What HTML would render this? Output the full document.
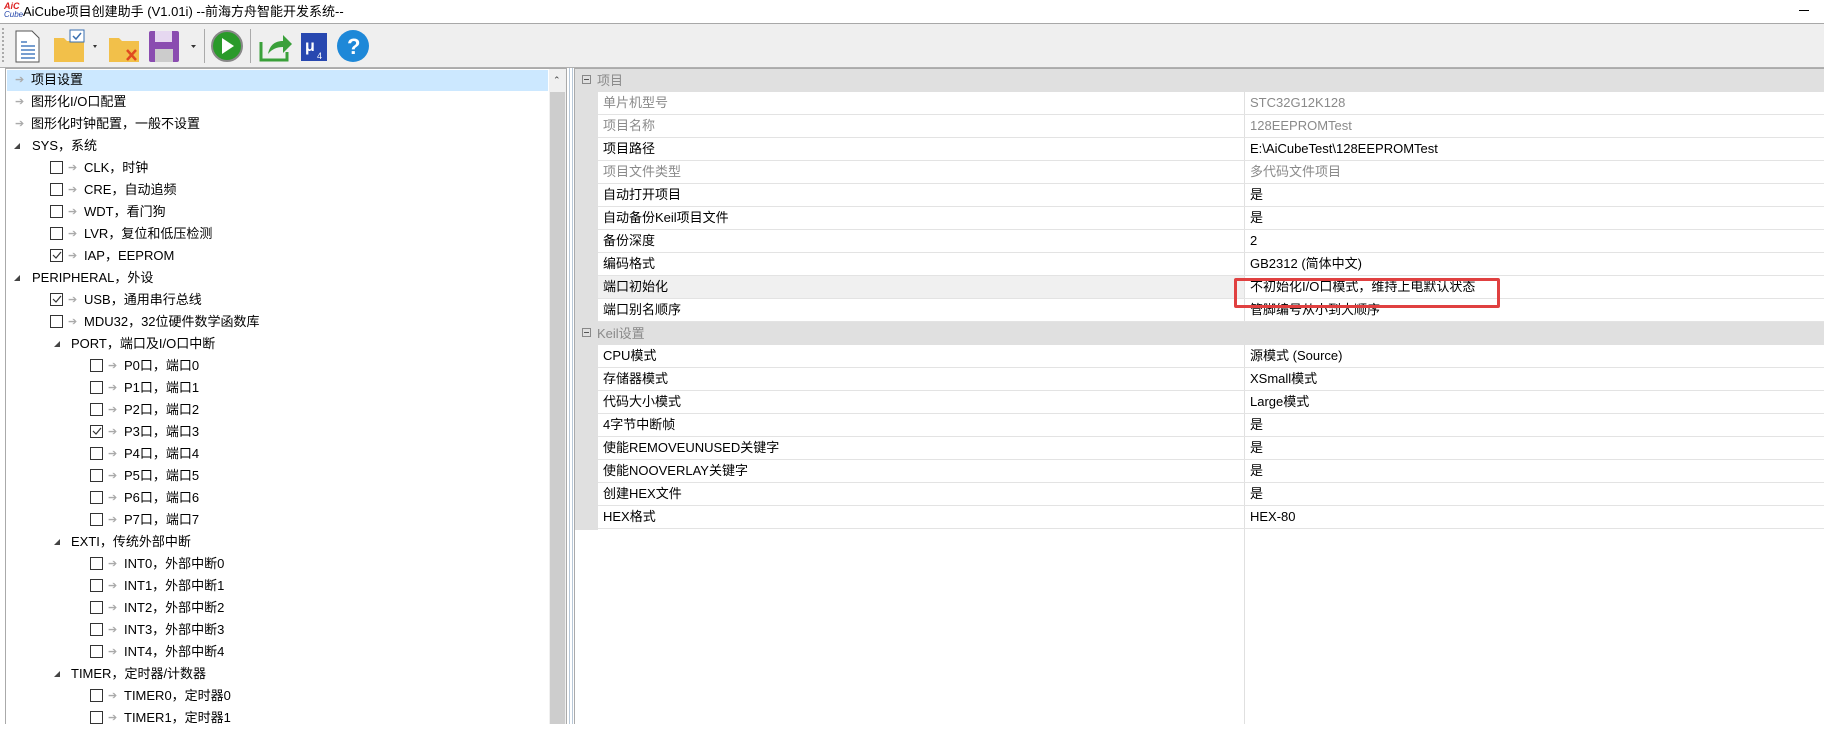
<!DOCTYPE html>
<html><head><meta charset="utf-8"><style>
*{margin:0;padding:0;box-sizing:border-box}
body{width:1824px;height:724px;overflow:hidden;background:#fff;font-family:"Liberation Sans","Noto Sans CJK SC",sans-serif;font-size:13px;color:#000;position:relative}
.a{position:absolute}
.t{position:absolute;white-space:nowrap;line-height:22px}
.cb{position:absolute;width:13px;height:13px;border:1px solid #333;background:#fff}
.ar{position:absolute;color:#aaa;font-size:11px;line-height:22px}
.tri{position:absolute;width:0;height:0;border-left:6px solid transparent;border-bottom:6px solid #444}
.pr{position:absolute;left:598px;right:0;height:23px;border-bottom:1px solid #e3e3e3}
.pl{position:absolute;left:5px;line-height:22px;white-space:nowrap}
.pv{position:absolute;left:652px;line-height:22px;white-space:nowrap}
.g{color:#8a8a8a}
</style></head><body>
<!-- title -->
<div class="a" style="left:4px;top:2px;font:bold italic 9px 'Liberation Sans';color:#d22;line-height:9px">AiC</div>
<div class="a" style="left:4px;top:11px;font:italic 8px 'Liberation Sans';color:#2244aa;line-height:8px">Cube</div>
<div class="t" style="left:23px;top:0;line-height:23px">AiCube项目创建助手 (V1.01i) --前海方舟智能开发系统--</div>
<div class="a" style="left:1799px;top:10px;width:10px;height:1px;background:#000"></div>
<div class="a" style="left:0;top:23px;width:1824px;height:1px;background:#a8a8a8"></div>
<!-- toolbar -->
<div class="a" style="left:0;top:24px;width:1824px;height:44px;background:#efefef;border-bottom:1px solid #b0b0b0"></div>
<div class="a" style="left:2px;top:28px;width:2px;height:34px;border-left:2px dotted #aaa"></div>
<svg class="a" style="left:12px;top:28px" width="370" height="36" viewBox="0 0 370 36">
 <path d="M4 3h16l7 7v24H4z" fill="#fff" stroke="#555"/><path d="M9 14h6M9 18h14M9 22h14M9 26h14M9 30h14" stroke="#4a7fc0" stroke-width="1.4"/>
 <path d="M42 10h10l3 3h17v21H42z" fill="#f2c04a"/><rect x="58" y="2" width="14" height="12" fill="#fff" stroke="#3a6fb0"/><path d="M61 8l3 3 5-6" stroke="#3a6fb0" fill="none" stroke-width="1.5"/>
 <path d="M81 17l4 0-2 3z" fill="#333"/>
 <path d="M97 10h10l3 3h17v21H97z" fill="#f2c04a"/><path d="M115 22l9 10M124 22l-9 10" stroke="#e04a20" stroke-width="2.5"/>
 <rect x="137" y="3" width="30" height="31" rx="2" fill="#8a4cb0"/><rect x="143" y="3" width="17" height="11" fill="#e6d8f0"/><rect x="143" y="21" width="18" height="13" fill="#ccc"/>
 <path d="M179 17h5l-2.5 3z" fill="#333"/>
 <rect x="192" y="1" width="1" height="34" fill="#aaa"/>
 <circle cx="215" cy="18" r="15" fill="#2a9a2a" stroke="#888" stroke-width="2"/><path d="M210 10l12 8-12 8z" fill="#fff"/>
 <rect x="238" y="1" width="1" height="34" fill="#aaa"/>
 <path d="M249 14v18h26v-8" fill="none" stroke="#3aa03a" stroke-width="3"/><path d="M256 26c2-10 8-13 15-13v-6l9 9-9 9v-6c-6 0-11 2-15 7z" fill="#3aa03a"/>
 <rect x="289" y="5" width="26" height="28" fill="#2848b0"/><text x="293" y="23" font-size="16" fill="#fff" font-family="Liberation Sans" font-weight="bold">μ</text><text x="305" y="31" font-size="9" fill="#fff" font-family="Liberation Sans">4</text>
 <circle cx="341" cy="18" r="16" fill="#1e88d8"/><text x="335" y="26" font-size="22" fill="#fff" font-family="Liberation Sans" font-weight="bold">?</text>
</svg>
<!-- left tree panel -->
<div class="a" style="left:5px;top:68px;width:562px;height:656px;border:1px solid #aaa;border-bottom:none;background:#fff"></div>
<div class="a" style="left:549px;top:69px;width:17px;height:655px;background:#f0f0f0"></div>
<div class="a" style="left:550px;top:92px;width:15px;height:632px;background:#cdcdcd"></div>
<div class="a" style="left:553px;top:75px;font-size:9px;color:#444">&#8963;</div>
<div class="a" style="left:7px;top:70px;width:541px;height:21px;background:#cce8ff"></div>
<div class="a" style="left:569px;top:68px;width:1px;height:656px;background:#b8c8d8"></div>
<div class="a" style="left:572px;top:68px;width:1px;height:656px;background:#b8c8d8"></div>
<div id="tree"></div>
<!-- right grid -->
<div class="a" style="left:574px;top:68px;width:1250px;height:656px;border-top:1px solid #aaa;border-left:1px solid #aaa;background:#fff"></div>
<div class="a" style="left:575px;top:69px;width:1249px;height:23px;background:#e0e0e0"></div>
<div class="a" style="left:575px;top:322px;width:1249px;height:23px;background:#e0e0e0"></div>
<div class="a" style="left:575px;top:92px;width:23px;height:438px;background:#e0e0e0"></div>
<div class="a" style="left:1244px;top:92px;width:1px;height:632px;background:#e0e0e0"></div>
<div class="a" style="left:582px;top:75px;width:9px;height:9px;border:1px solid #888;font-size:0"><div style="margin:3px 1px;height:1px;background:#555"></div></div>
<div class="t g" style="left:597px;top:69px;line-height:23px">项目</div>
<div class="a" style="left:582px;top:328px;width:9px;height:9px;border:1px solid #888"><div style="margin:3px 1px;height:1px;background:#555"></div></div>
<div class="t g" style="left:597px;top:322px;line-height:23px">Keil设置</div>
<div id="grid"></div>
<div class="a" style="left:1234px;top:278px;width:266px;height:30px;border:3px solid #e04040;border-radius:2px"></div>
<script>
var T=[[0,'n','项目设置'],[0,'n','图形化I/O口配置'],[0,'n','图形化时钟配置，一般不设置'],[0,'e','SYS，系统'],
[1,'c','CLK，时钟'],[1,'c','CRE，自动追频'],[1,'c','WDT，看门狗'],[1,'c','LVR，复位和低压检测'],[1,'k','IAP，EEPROM'],
[0,'e','PERIPHERAL，外设'],[1,'k','USB，通用串行总线'],[1,'c','MDU32，32位硬件数学函数库'],[2,'e','PORT，端口及I/O口中断'],
[3,'c','P0口，端口0'],[3,'c','P1口，端口1'],[3,'c','P2口，端口2'],[3,'k','P3口，端口3'],[3,'c','P4口，端口4'],[3,'c','P5口，端口5'],[3,'c','P6口，端口6'],[3,'c','P7口，端口7'],
[2,'e','EXTI，传统外部中断'],[3,'c','INT0，外部中断0'],[3,'c','INT1，外部中断1'],[3,'c','INT2，外部中断2'],[3,'c','INT3，外部中断3'],[3,'c','INT4，外部中断4'],
[2,'e','TIMER，定时器/计数器'],[3,'c','TIMER0，定时器0'],[3,'c','TIMER1，定时器1']];
var h='';T.forEach(function(r,i){var y=69+i*22;var L=r[0],k=r[1];
if(k=='n'){h+='<div class="ar" style="left:15px;top:'+y+'px">➔</div><div class="t" style="left:31px;top:'+y+'px">'+r[2]+'</div>';}
else if(k=='e'){var x=L==0?14:54;h+='<div class="tri" style="left:'+x+'px;top:'+(y+8)+'px"></div><div class="t" style="left:'+(L==0?32:71)+'px;top:'+y+'px">'+r[2]+'</div>';}
else{var cx=L==1?50:90;h+='<div class="cb" style="left:'+cx+'px;top:'+(y+4)+'px">'+(k=='k'?'<svg width="11" height="11" style="position:absolute;left:0;top:0"><path d="M2 5l3 3 5-6" stroke="#333" fill="none" stroke-width="1.2"/></svg>':'')+'</div><div class="ar" style="left:'+(cx+18)+'px;top:'+y+'px">➔</div><div class="t" style="left:'+(cx+34)+'px;top:'+y+'px">'+r[2]+'</div>';}
});document.getElementById('tree').innerHTML=h;
var P=[[92,'单片机型号','STC32G12K128',1],[115,'项目名称','128EEPROMTest',1],[138,'项目路径','E:\\AiCubeTest\\128EEPROMTest'],[161,'项目文件类型','多代码文件项目',1],[184,'自动打开项目','是'],[207,'自动备份Keil项目文件','是'],[230,'备份深度','2'],[253,'编码格式','GB2312 (简体中文)'],[276,'端口初始化','不初始化I/O口模式，维持上电默认状态',2],[299,'端口别名顺序','管脚编号从小到大顺序'],
[345,'CPU模式','源模式 (Source)'],[368,'存储器模式','XSmall模式'],[391,'代码大小模式','Large模式'],[414,'4字节中断帧','是'],[437,'使能REMOVEUNUSED关键字','是'],[460,'使能NOOVERLAY关键字','是'],[483,'创建HEX文件','是'],[506,'HEX格式','HEX-80']];
h='';P.forEach(function(p){var c=p[3]==1?' g':'';h+='<div class="pr" style="top:'+p[0]+'px">'+(p[3]==2?'<div class="a" style="left:0;top:0;width:646px;height:22px;background:#f0f0f0"></div>':'')+'<div class="pl'+c+'">'+p[1]+'</div><div class="pv'+c+'">'+p[2]+'</div></div>';});
document.getElementById('grid').innerHTML=h;
</script>
</body></html>
